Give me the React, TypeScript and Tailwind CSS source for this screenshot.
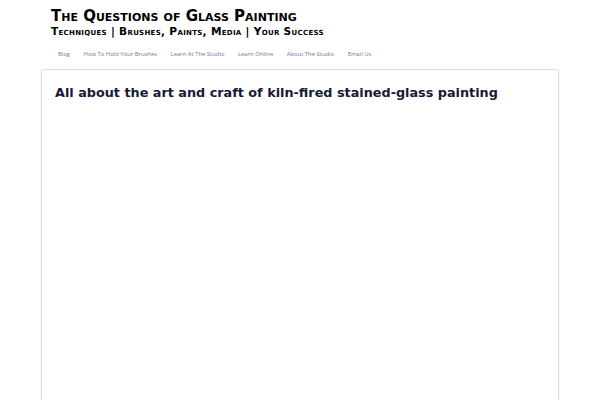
const NAV = ['Blog', 'How To Hold Your Brushes', 'Learn At The Studio', 'Learn Online', 'About The Studio', 'Email Us']

export default function App() {
  return (
    <div className="h-[400px] w-[600px] overflow-hidden bg-white">
      <header className="pl-[51px] pt-[8px] text-black [font-family:'DejaVu_Sans',sans-serif]">
        <div className="text-[15px] font-bold leading-[16px] [font-variant:small-caps]">
          The Questions of Glass Painting
        </div>
        <div className="mt-[1px] text-[10.6px] font-bold leading-[12px] tracking-[0.3px] [font-variant:small-caps]">
          Techniques | Brushes, Paints, Media | Your Success
        </div>
      </header>
      <nav className="mt-[13px] flex gap-[13.5px] pl-[58px] text-[5.9px] leading-[9px] text-[#5f7ea6] [font-family:'Open_Sans',sans-serif]">
        {NAV.map((item) => (
          <span key={item}>{item}</span>
        ))}
      </nav>
      <main className="mx-[41px] mt-[10px] h-[400px] rounded-[3px] border border-[#dcdcdc] px-[13px] pt-[14px] shadow-[0_0_2px_rgba(0,0,0,0.08)]">
        <h1 className="text-[12.8px] font-bold leading-[18px] text-[#171a36] [font-family:'DejaVu_Sans',sans-serif]">
          All about the art and craft of kiln-fired stained-glass painting
        </h1>
      </main>
    </div>
  )
}
